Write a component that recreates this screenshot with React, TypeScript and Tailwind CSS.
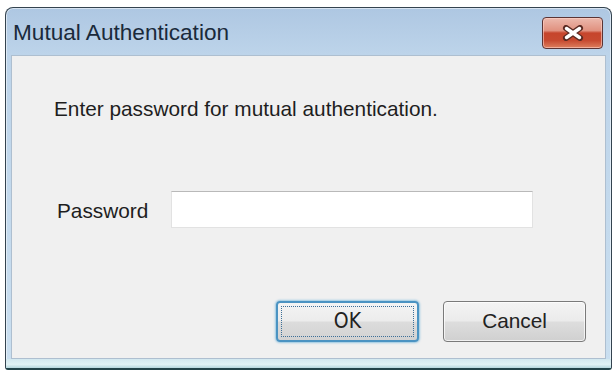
export default function App() {
  return (
    <div className="h-[373px] w-[615px] bg-white pl-[5px] pt-[7px]" style={{ fontFamily: '"Liberation Sans", Arial, sans-serif' }}>
      <div className="flex h-[363px] w-[607px] flex-col rounded-t-[8px] rounded-b-[3px] border border-[#34434f] border-b-[2px] border-b-[#23444a] bg-[linear-gradient(180deg,#aec7e2_0%,#bdd4ea_13%,#cadff0_100%)] shadow-[inset_0_0_0_1px_rgba(255,255,255,0.5)]">
        {/* title bar */}
        <div className="flex h-[47px] shrink-0 items-start justify-between pl-[7px] pr-[8px]">
          <span className="mt-[12px] text-[22.6px] leading-[26px] text-[#1a2a3b]">Mutual Authentication</span>
          <button className="mt-[9px] flex h-[32px] w-[61px] items-center justify-center rounded-[4px] border border-[#5b3434] bg-[linear-gradient(180deg,#ecb9ad_0%,#e0917f_42%,#c6452c_50%,#c74a30_75%,#dd7f5e_100%)] shadow-[inset_0_0_0_1px_rgba(255,210,200,0.6)]">
            <svg width="22" height="16" viewBox="0 0 22 16">
              <path d="M4 3 L18 13 M18 3 L4 13" stroke="#5a2a22" strokeWidth="6" strokeLinecap="round" />
              <path d="M4.5 3.5 L17.5 12.5 M17.5 3.5 L4.5 12.5" stroke="#ffffff" strokeWidth="3.4" strokeLinecap="round" />
            </svg>
          </button>
        </div>

        {/* client area */}
        <div className="mx-[5px] flex flex-1 flex-col border border-[#aebfd0] bg-[#f0f0f0] text-[#1e1e1e]">
          <p className="ml-[42px] mt-[41px] text-[20.8px] leading-[24px]">Enter password for mutual authentication.</p>

          <div className="mt-[70px] flex items-start">
            <label className="ml-[45px] mt-[8px] w-[114px] text-[20.8px] leading-[24px]">Password</label>
            <div className="h-[37px] w-[362px] border border-[#e2e2e2] border-t-[#b9b9b9] bg-white" />
          </div>

          <div className="mt-[73px] flex justify-end gap-[24px] pr-[19px]">
            <button className="flex h-[41px] w-[143px] items-center justify-center rounded-[4px] border-2 border-[#4b93c2] bg-[linear-gradient(180deg,#f4f4f4_0%,#ececec_48%,#dcdcdc_52%,#d2d2d2_100%)] p-[3px] shadow-[0_0_2px_1px_rgba(90,170,215,0.6)]">
              <span className="flex h-full w-full items-center justify-center border border-dotted border-[#3d6f98] text-[21px] leading-none text-[#222]" style={{ fontFamily: '"DejaVu Sans Condensed", "Liberation Sans Narrow", sans-serif' }}>
                OK
              </span>
            </button>
            <button className="flex h-[41px] w-[143px] items-center justify-center rounded-[4px] border border-[#7a7a7a] bg-[linear-gradient(180deg,#f4f4f4_0%,#ebebeb_48%,#dddddd_52%,#d0d0d0_100%)] text-[20.8px] leading-none text-[#222] shadow-[inset_0_0_0_1px_rgba(255,255,255,0.7)]">
              Cancel
            </button>
          </div>
        </div>

        <div className="h-[9px] shrink-0 bg-[linear-gradient(180deg,#d2e8ef_0%,#e1f2f5_60%,#b6d7de_100%)]" />
      </div>
    </div>
  );
}
